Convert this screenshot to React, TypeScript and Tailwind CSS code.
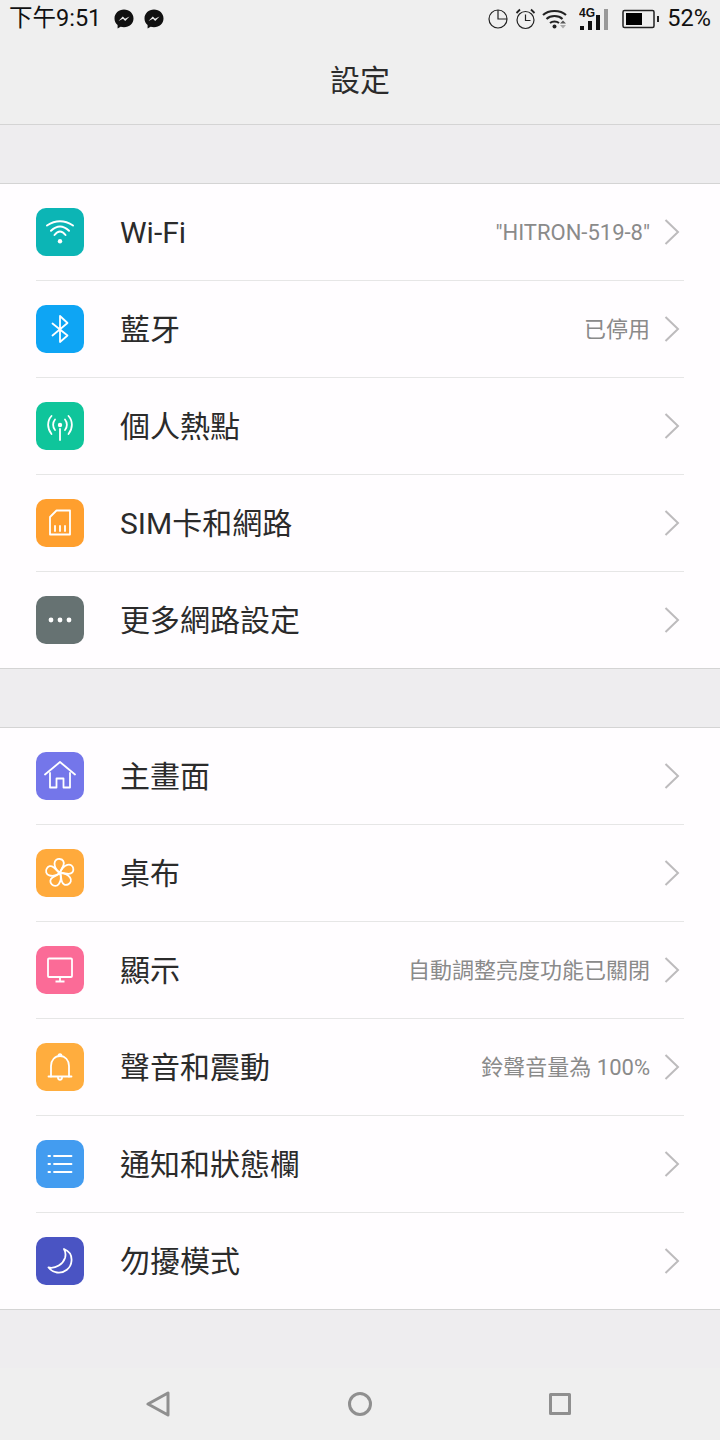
import React from "react";

const S = { fill: "none", stroke: "#fff", strokeWidth: 1.8, strokeLinecap: "round" as const, strokeLinejoin: "round" as const };

const Wifi = () => (
  <svg width="48" height="48" viewBox="0 0 48 48" {...S} strokeWidth="2">
    <path d="M11 17.500Q24 9.100 37 17.500" />
    <path d="M15 22.700Q24 14.300 33 22.700" />
    <path d="M18.500 27Q24 20 29.500 27" />
    <circle cx="24" cy="33.300" r="2.200" fill="#fff" stroke="none" />
  </svg>
);
const Bt = () => (
  <svg width="48" height="48" viewBox="0 0 48 48" {...S}>
    <path d="M16.500 18.500L31.500 30.500L24 37V11L31.500 18L16.500 30.500" />
  </svg>
);
const Hotspot = () => (
  <svg width="48" height="48" viewBox="0 0 48 48" {...S}>
    <circle cx="24" cy="23" r="2.200" fill="#fff" stroke="none" />
    <path d="M24 27V38" />
    <path d="M19 17.500C16.500 20.500 16.500 25 19 28" />
    <path d="M29 17.500C31.500 20.500 31.500 25 29 28" />
    <path d="M15.500 14C11 19 11 26.500 15.500 32" />
    <path d="M32.500 14C37 19 37 26.500 32.500 32" />
  </svg>
);
const Sim = () => (
  <svg width="48" height="48" viewBox="0 0 48 48" {...S}>
    <path d="M20.500 11.500H34V35.500H14V18Z" />
    <path d="M19 27V32M24 27V32M29 27V32" />
  </svg>
);
const More = () => (
  <svg width="48" height="48" viewBox="0 0 48 48">
    <circle cx="15" cy="24" r="2.400" fill="#fff" />
    <circle cx="24" cy="24" r="2.400" fill="#fff" />
    <circle cx="33" cy="24" r="2.400" fill="#fff" />
  </svg>
);
const Home = () => (
  <svg width="48" height="48" viewBox="0 0 48 48" {...S}>
    <path d="M9 22.500L24 10L39 22.500" />
    <path d="M14 21V35.500H20.500V26.500H27.500V35.500H34V21" />
  </svg>
);
const petal = "M24 24C20.500 21.500 18.500 18 18.500 14.500C18.500 11 21.500 9.500 24 10C27 10.500 28.500 13 27.500 16C26.500 19 24.500 21 24 24Z";
const Flower = () => (
  <svg width="48" height="48" viewBox="0 0 48 48" {...S}>
    <path d={petal} />
    <path d={petal} transform="rotate(72 24 24)" />
    <path d={petal} transform="rotate(144 24 24)" />
    <path d={petal} transform="rotate(216 24 24)" />
    <path d={petal} transform="rotate(288 24 24)" />
  </svg>
);
const Monitor = () => (
  <svg width="48" height="48" viewBox="0 0 48 48" {...S} strokeLinecap="butt">
    <rect x="12" y="12.500" width="24" height="18.500" rx="1" />
    <path d="M24 31V35" />
    <path d="M19.500 35.500H28.500" strokeWidth="2" />
  </svg>
);
const Bell = () => (
  <svg width="48" height="48" viewBox="0 0 48 48" {...S}>
    <path d="M12.500 33.500H35.500" />
    <path d="M15 33.500V23C15 17 19 13 24 13C29 13 33 17 33 23V33.500" />
    <path d="M22.500 13C22.500 10.500 25.500 10.500 25.500 13" />
    <path d="M22 34.500C22 37.500 26 37.500 26 34.500" />
  </svg>
);
const ListI = () => (
  <svg width="48" height="48" viewBox="0 0 48 48" {...S}>
    <path d="M18 16H35.500M18 24H35.500M18 32H35.500" />
    <path d="M12.500 16H14M12.500 24H14M12.500 32H14" strokeWidth="2" />
  </svg>
);
const Moon = () => (
  <svg width="48" height="48" viewBox="0 0 48 48" {...S}>
    <path d="M28 12C33 14 36 18.500 35.500 24C35 31 28.500 36.500 21 35.500C17.500 35 14.500 33 12.500 30.500C20 32 27 27 29 21C30 17.500 29.500 14.500 28 12Z" />
  </svg>
);

const Chevron = () => (
  <svg width="16" height="26" viewBox="0 0 16 26" fill="none" stroke="#bdbbbd" strokeWidth="2" className="ml-[14px] mr-[4px]">
    <path d="M1.500 1L14 13L1.500 25" />
  </svg>
);

type Item = { icon: React.ReactNode; color: string; label: string; value?: string; last?: boolean };

const Row = ({ icon, color, label, value, last }: Item) => (
  <div className="pl-9 pr-9">
    <div className={`flex items-center ${last ? "h-[96px]" : "h-[97px] border-b border-[#e6e6e6]"}`}>
      <div className={`h-12 w-12 shrink-0 rounded-[10px] ${color}`}>{icon}</div>
      <span className="ml-9 pt-[2px] text-[30px] leading-none text-[#2b2b2b]">{label}</span>
      <span className="ml-auto pt-[2px] text-[22px] leading-none text-[#8a8a8a]">{value}</span>
      <Chevron />
    </div>
  </div>
);

const Section = ({ items }: { items: Item[] }) => (
  <div className="border-y border-[#d4d4d4] bg-[#fffdff]">
    {items.map((it, i) => (
      <Row key={it.label} {...it} last={i === items.length - 1} />
    ))}
  </div>
);

const Messenger = () => (
  <svg width="20" height="20" viewBox="0 0 20 20">
    <path d="M10 .5C4.600.5.500 4.400.500 9.400c0 2.700 1.200 5 3.100 6.600v3.400l3-1.700c1 .3 2.200.5 3.400.5 5.400 0 9.500-3.900 9.500-8.800S15.400.5 10 .5Z" fill="#111" />
    <path d="M4.500 12L8.800 7.500L11 9.700L15.500 7.500L11.200 12L9 9.800Z" fill="#eee" />
  </svg>
);

const font = "font-['Roboto','Noto_Sans_CJK_TC',sans-serif]";

export default function App() {
  return (
    <div className={`flex h-[1440px] w-[720px] flex-col overflow-hidden bg-[#eeedef] ${font}`}>
      <header className="h-[125px] shrink-0 border-b border-[#d4d4d4] bg-[#efefef]">
        <div className="flex h-10 items-center pl-[9px] pr-[9px] pb-[3px] text-[#111]">
          <span className="text-[23.500px] leading-none">下午9:51</span>
          <span className="ml-[13px] flex gap-[10px]"><Messenger /><Messenger /></span>
          <span className="ml-auto flex items-center">
            <svg width="20" height="20" viewBox="0 0 20 20" fill="none" stroke="#222" strokeWidth="1.200">
              <circle cx="10" cy="10" r="9" />
              <path d="M10 1V10H19" />
            </svg>
            <svg width="21" height="22" viewBox="0 0 21 22" fill="none" stroke="#222" strokeWidth="1.200" className="ml-[7px]">
              <circle cx="10.500" cy="12" r="8.500" />
              <path d="M10.500 6.500V12.500H15.500" />
              <path d="M1.500 5L5 1.500M19.500 5L16 1.500" strokeWidth="1.800" />
            </svg>
            <svg width="25" height="22" viewBox="0 0 25 22" fill="none" stroke="#222" strokeWidth="2" className="ml-[6px]">
              <path d="M1 7C6.500 1.500 18.500 1.500 24 7" />
              <path d="M4.500 11C8.500 7 16.500 7 20.500 11" />
              <path d="M8 15C10.500 13 14.500 13 17 15" />
              <circle cx="12.500" cy="18.500" r="2" fill="#222" stroke="none" />
              <path d="M18 15.500H24L21 12.500Z" fill="#555" stroke="none" />
              <path d="M18 17H24L21 20.500Z" fill="#aaa" stroke="none" />
            </svg>
            <svg width="30" height="24" viewBox="0 0 30 24" className="ml-[12px]">
              <rect x="1" y="19" width="4" height="4" fill="#111" />
              <rect x="9" y="14" width="4" height="9" fill="#111" />
              <rect x="17" y="8" width="4" height="15" fill="#111" />
              <rect x="25" y="2" width="4" height="21" fill="#999" />
              <text x="0" y="10" fontSize="12" fontWeight="700" fill="#111" fontFamily="Liberation Sans">4G</text>
            </svg>
            <svg width="38" height="20" viewBox="0 0 38 20" className="ml-[13px]">
              <rect x="1" y="1.500" width="31" height="17" rx="1.500" fill="none" stroke="#222" strokeWidth="1.500" />
              <rect x="4" y="4" width="16" height="12" fill="#000" />
              <rect x="35" y="7" width="2" height="6" fill="#222" />
            </svg>
            <span className="ml-[7px] text-[23.500px] leading-none">52%</span>
          </span>
        </div>
        <div className="flex h-[84px] items-center justify-center pb-[2px] text-[30px] leading-none text-[#2b2b2b]">設定</div>
      </header>
      <div className="h-[58px] shrink-0" />
      <Section
        items={[
          { icon: <Wifi />, color: "bg-[#0cb5b5]", label: "Wi-Fi", value: "\"HITRON-519-8\"" },
          { icon: <Bt />, color: "bg-[#0ea5f4]", label: "藍牙", value: "已停用" },
          { icon: <Hotspot />, color: "bg-[#0fc59b]", label: "個人熱點" },
          { icon: <Sim />, color: "bg-[#ff9f2e]", label: "SIM卡和網路" },
          { icon: <More />, color: "bg-[#667272]", label: "更多網路設定" },
        ]}
      />
      <div className="h-[58px] shrink-0" />
      <Section
        items={[
          { icon: <Home />, color: "bg-[#7476ea]", label: "主畫面" },
          { icon: <Flower />, color: "bg-[#ffaa3c]", label: "桌布" },
          { icon: <Monitor />, color: "bg-[#fb6b97]", label: "顯示", value: "自動調整亮度功能已關閉" },
          { icon: <Bell />, color: "bg-[#ffad3e]", label: "聲音和震動", value: "鈴聲音量為 100%" },
          { icon: <ListI />, color: "bg-[#439cf0]", label: "通知和狀態欄" },
          { icon: <Moon />, color: "bg-[#4a54c3]", label: "勿擾模式" },
        ]}
      />
      <div className="flex-1" />
      <nav className="flex h-[72px] shrink-0 items-center justify-between bg-[#efefef] pl-[146px] pr-[149px]">
        <svg width="24" height="26" viewBox="0 0 24 26" fill="none" stroke="#8f8f8f" strokeWidth="3" strokeLinejoin="round"><path d="M22 2V24L2 13Z" /></svg>
        <svg width="24" height="24" viewBox="0 0 24 24" fill="none" stroke="#8f8f8f" strokeWidth="3"><circle cx="12" cy="12" r="10.500" /></svg>
        <svg width="22" height="22" viewBox="0 0 22 22" fill="none" stroke="#8f8f8f" strokeWidth="3" strokeLinejoin="round"><rect x="1.500" y="1.500" width="19" height="19" /></svg>
      </nav>
    </div>
  );
}
